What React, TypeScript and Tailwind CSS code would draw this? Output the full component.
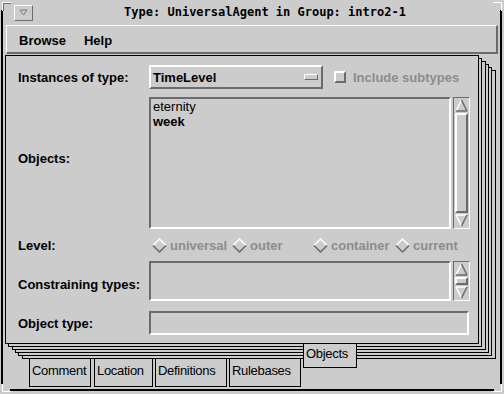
const raised = "border-2 border-t-white border-l-white border-b-[#6b6b6b] border-r-[#6b6b6b]";
const sunken = "border-2 border-t-[#6b6b6b] border-l-[#6b6b6b] border-b-white border-r-white";

function UpArrow() {
  return (
    <svg width="13" height="13" viewBox="0 0 13 13" className="block">
      <polygon points="6.5,1 12,12 1,12" fill="#cccccc" />
      <line x1="1" y1="12" x2="6.5" y2="1" stroke="#ffffff" strokeWidth="1.5" />
      <line x1="6.5" y1="1" x2="12" y2="12" stroke="#6b6b6b" strokeWidth="1.5" />
      <line x1="1" y1="12" x2="12" y2="12" stroke="#6b6b6b" strokeWidth="1.5" />
    </svg>
  );
}

function DownArrow() {
  return (
    <svg width="13" height="13" viewBox="0 0 13 13" className="block">
      <polygon points="1,1 12,1 6.5,12" fill="#cccccc" />
      <line x1="1" y1="1" x2="12" y2="1" stroke="#ffffff" strokeWidth="1.5" />
      <line x1="1" y1="1" x2="6.5" y2="12" stroke="#ffffff" strokeWidth="1.5" />
      <line x1="6.5" y1="12" x2="12" y2="1" stroke="#6b6b6b" strokeWidth="1.5" />
    </svg>
  );
}

function ScrollBar() {
  return (
    <div className="ml-[2px] w-[17px] flex flex-col items-center border border-t-[#6b6b6b] border-l-[#6b6b6b] border-b-white border-r-white py-[1px]">
      <UpArrow />
      <div className={`flex-1 w-[13px] my-[1px] ${raised}`} />
      <DownArrow />
    </div>
  );
}

function Diamond() {
  return (
    <svg width="15" height="15" viewBox="0 0 15 15" className="block shrink-0">
      <polyline points="1,7.5 7.5,1 14,7.5" fill="none" stroke="#ffffff" strokeWidth="1.5" />
      <polyline points="14,7.5 7.5,14 1,7.5" fill="none" stroke="#6b6b6b" strokeWidth="1.5" />
    </svg>
  );
}

function Radio({ label, width }: { label: string; width: string }) {
  return (
    <div className={`flex items-center gap-[3px] ${width}`}>
      <Diamond />
      <span className="text-[#8c8c8c] font-bold">{label}</span>
    </div>
  );
}

const backPages = [
  "left-[22px] top-[15px]",
  "left-[18px] top-[12px]",
  "left-[15px] top-[9px]",
  "left-[12px] top-[6px]",
  "left-[8px] top-[3px]",
];

export default function App() {
  return (
    <div className="relative w-[504px] h-[394px] overflow-hidden bg-[#cccccc] text-black text-[13px] leading-[15px] font-['Liberation_Sans',Arial,sans-serif]">
      {/* window frame */}
      <div className="absolute left-[1px] top-[10px] w-[2px] h-[374px] bg-black" />
      <div className="absolute left-[500px] top-[10px] w-[2px] h-[374px] bg-black" />
      <div className="absolute left-[10px] top-[389px] w-[484px] h-[2px] bg-black" />
      <div className="absolute left-[2px] top-[2px] w-[9px] h-[9px] border-t border-l border-white" />
      <div className="absolute left-[3px] top-[3px] w-[8px] h-[8px] border-t border-l border-[#6b6b6b]" />
      <div className="absolute left-[493px] top-[2px] w-[9px] h-[9px] border-t border-r border-white" />
      <div className="absolute left-[2px] top-[384px] w-[9px] h-[8px] border-b border-l border-white" />
      <div className="absolute left-[493px] top-[384px] w-[9px] h-[8px] border-b border-r border-white" />

      {/* title bar */}
      <div className="flex items-center h-[25px] pl-[14px] pr-[7px]">
        <div className="w-[19px] h-[16px] flex items-center justify-center border border-t-white border-l-white border-b-[#6b6b6b] border-r-[#6b6b6b]">
          <svg width="9" height="7" viewBox="0 0 9 7">
            <polygon points="1,1 8,1 4.5,6" fill="none" stroke="#7a7a7a" strokeWidth="1" />
          </svg>
        </div>
        <div className="flex-1 text-center font-bold text-[12px] font-['DejaVu_Sans_Mono',monospace]">
          Type: UniversalAgent in Group: intro2-1
        </div>
      </div>

      {/* menu bar */}
      <div className="ml-[6px] w-[492px] h-[29px] flex items-center gap-[18px] pl-[12px] pt-[2px] border-t border-l border-t-white border-l-white border-b-2 border-r-2 border-b-[#6b6b6b] border-r-[#6b6b6b] font-bold">
        <span>Browse</span>
        <span>Help</span>
      </div>

      {/* notebook */}
      <div className="relative mt-[1px]">
        {backPages.map((p) => (
          <div key={p} className={`absolute ${p} w-[474px] h-[289px] border border-black bg-[#cccccc]`} />
        ))}

        <div className="relative z-10 ml-[5px] w-[474px] h-[289px] border border-black bg-[#cccccc] flex flex-col pl-[12px] pt-[9px]">
          {/* instances of type */}
          <div className="flex items-center h-[24px]">
            <div className="w-[131px] font-bold">Instances of type:</div>
            <div className={`w-[174px] h-[24px] flex items-center pl-[2px] pr-[3px] ${raised}`}>
              <span className="flex-1 font-bold">TimeLevel</span>
              <div className="w-[14px] h-[6px] border border-t-white border-l-white border-b-[#6b6b6b] border-r-[#6b6b6b]" />
            </div>
            <div className="ml-[11px] w-[12px] h-[12px] border-2 border-t-white border-l-white border-b-[#6b6b6b] border-r-[#6b6b6b]" />
            <span className="ml-[7px] font-bold text-[#8c8c8c]">Include subtypes</span>
          </div>

          {/* objects */}
          <div className="flex mt-[8px] h-[132px]">
            <div className="w-[131px] font-bold mt-[54px]">Objects:</div>
            <div className={`w-[302px] ${sunken} pl-[2px]`}>
              <div>eternity</div>
              <div className="font-bold">week</div>
            </div>
            <ScrollBar />
          </div>

          {/* level */}
          <div className="flex items-center h-[32px]">
            <div className="w-[131px] font-bold">Level:</div>
            <div className="flex items-center ml-[3px]">
              <Radio label="universal" width="w-[80px]" />
              <Radio label="outer" width="w-[81px]" />
              <Radio label="container" width="w-[82px]" />
              <Radio label="current" width="w-[70px]" />
            </div>
          </div>

          {/* constraining types */}
          <div className="flex h-[40px]">
            <div className="w-[131px] font-bold mt-[16px]">Constraining types:</div>
            <div className={`w-[302px] ${sunken}`} />
            <ScrollBar />
          </div>

          {/* object type */}
          <div className="flex items-center mt-[10px] h-[24px]">
            <div className="w-[131px] font-bold">Object type:</div>
            <div className={`w-[320px] h-[24px] ${sunken}`} />
          </div>
        </div>

        {/* bottom tabs */}
        <div className="flex mt-[15px] ml-[29px] h-[28px] text-[13px] tracking-[-0.3px]">
          <div className="w-[62px] border-l border-r border-b border-black pl-[2px] pt-[4px]">Comment</div>
          <div className="ml-[3px] w-[59px] border-l border-r border-b border-black pl-[2px] pt-[4px]">Location</div>
          <div className="ml-[2px] w-[72px] border-l border-r border-b border-black pl-[2px] pt-[4px]">Definitions</div>
          <div className="ml-[2px] w-[72px] border-l border-r border-b border-black pl-[2px] pt-[4px]">Rulebases</div>
        </div>

        <div className="absolute z-20 left-[303px] top-[289px] w-[54px] h-[24px] bg-[#cccccc] border-l border-r border-b border-black pl-[2px] pt-[2px] tracking-[-0.3px]">
          Objects
        </div>
      </div>
    </div>
  );
}
